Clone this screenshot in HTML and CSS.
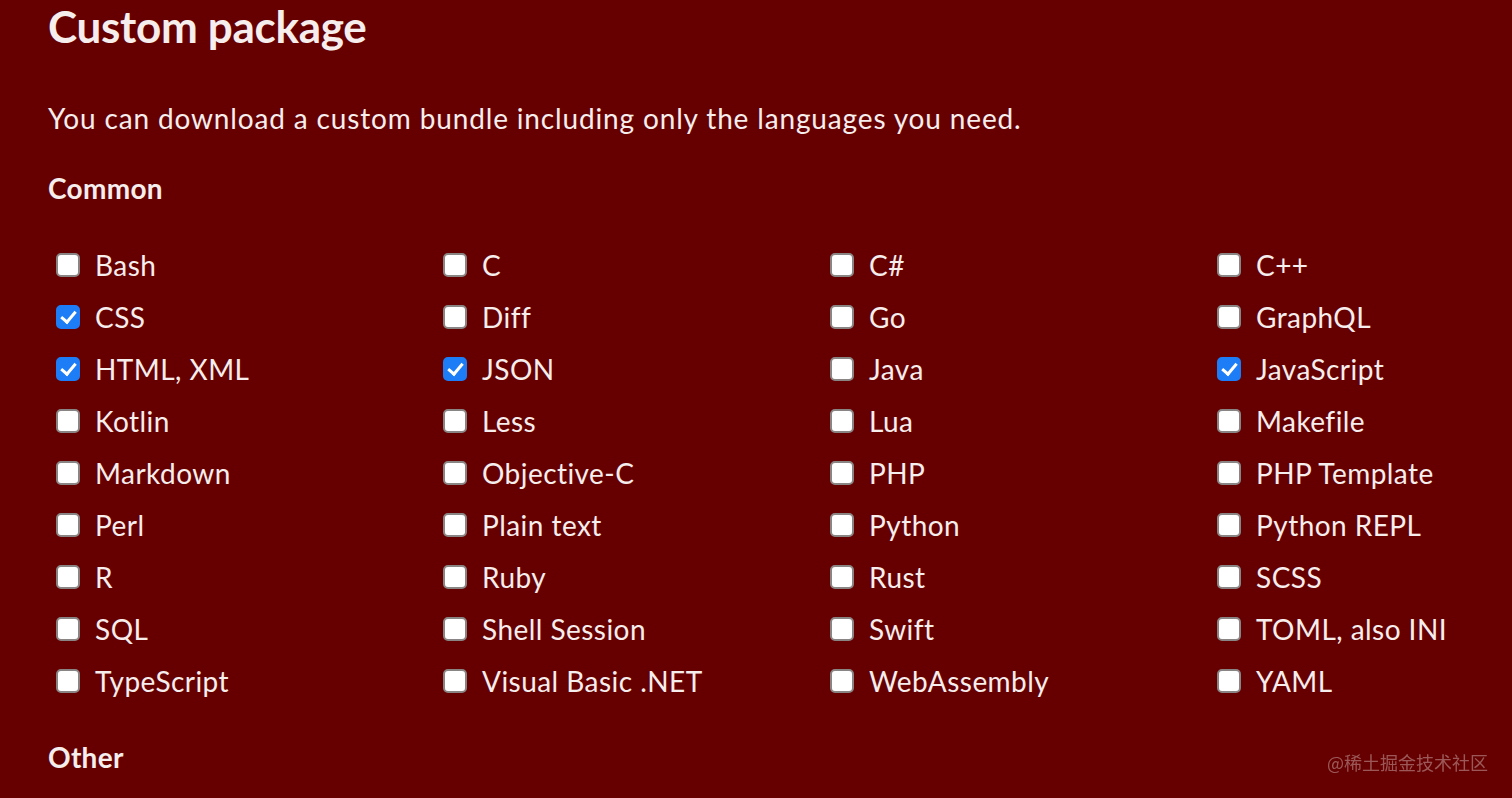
FILE: index.html
```html
<!DOCTYPE html>
<html lang="en">
<head>
<meta charset="utf-8">
<title>Custom package</title>
<link rel="stylesheet" href="styles.css">
</head>
<body>
<main class="page">
  <h2 class="title">Custom package</h2>
  <p class="intro">You can download a custom bundle including only the languages you need.</p>
  <h3 class="group">Common</h3>
  <div class="langs">
    <label class="lang"><input type="checkbox"><span>Bash</span></label>
    <label class="lang"><input type="checkbox"><span>C</span></label>
    <label class="lang"><input type="checkbox"><span>C#</span></label>
    <label class="lang"><input type="checkbox"><span>C++</span></label>
    <label class="lang"><input type="checkbox" checked><span>CSS</span></label>
    <label class="lang"><input type="checkbox"><span>Diff</span></label>
    <label class="lang"><input type="checkbox"><span>Go</span></label>
    <label class="lang"><input type="checkbox"><span>GraphQL</span></label>
    <label class="lang"><input type="checkbox" checked><span>HTML, XML</span></label>
    <label class="lang"><input type="checkbox" checked><span>JSON</span></label>
    <label class="lang"><input type="checkbox"><span>Java</span></label>
    <label class="lang"><input type="checkbox" checked><span>JavaScript</span></label>
    <label class="lang"><input type="checkbox"><span>Kotlin</span></label>
    <label class="lang"><input type="checkbox"><span>Less</span></label>
    <label class="lang"><input type="checkbox"><span>Lua</span></label>
    <label class="lang"><input type="checkbox"><span>Makefile</span></label>
    <label class="lang"><input type="checkbox"><span>Markdown</span></label>
    <label class="lang"><input type="checkbox"><span>Objective-C</span></label>
    <label class="lang"><input type="checkbox"><span>PHP</span></label>
    <label class="lang"><input type="checkbox"><span>PHP Template</span></label>
    <label class="lang"><input type="checkbox"><span>Perl</span></label>
    <label class="lang"><input type="checkbox"><span>Plain text</span></label>
    <label class="lang"><input type="checkbox"><span>Python</span></label>
    <label class="lang"><input type="checkbox"><span>Python REPL</span></label>
    <label class="lang"><input type="checkbox"><span>R</span></label>
    <label class="lang"><input type="checkbox"><span>Ruby</span></label>
    <label class="lang"><input type="checkbox"><span>Rust</span></label>
    <label class="lang"><input type="checkbox"><span>SCSS</span></label>
    <label class="lang"><input type="checkbox"><span>SQL</span></label>
    <label class="lang"><input type="checkbox"><span>Shell Session</span></label>
    <label class="lang"><input type="checkbox"><span>Swift</span></label>
    <label class="lang"><input type="checkbox"><span>TOML, also INI</span></label>
    <label class="lang"><input type="checkbox"><span>TypeScript</span></label>
    <label class="lang"><input type="checkbox"><span>Visual Basic .NET</span></label>
    <label class="lang"><input type="checkbox"><span>WebAssembly</span></label>
    <label class="lang"><input type="checkbox"><span>YAML</span></label>
  </div>
  <h3 class="group group-other">Other</h3>
</main>
<div class="watermark">@稀土掘金技术社区</div>
</body>
</html>
```

FILE: styles.css
```css
html, body {
  margin: 0;
  padding: 0;
  height: 100%;
  overflow: hidden;
}

body {
  background: #660000;
  color: #f6eded;
  font-family: Lato, "Noto Sans", sans-serif;
}

.page {
  padding: 0 0 0 48px;
}

.title {
  margin: -1px 0 0;
  font-size: 44px;
  font-weight: 700;
  line-height: 54px;
  letter-spacing: -0.3px;
}

.intro {
  margin: 47px 0 0;
  font-size: 28px;
  line-height: 36px;
  letter-spacing: 0.85px;
}

.group {
  margin: 34px 0 0;
  font-size: 28px;
  font-weight: 700;
  line-height: 36px;
  letter-spacing: 0.3px;
}

.group-other {
  margin-top: 32px;
}

.langs {
  display: grid;
  grid-template-columns: repeat(3, 387px) 280px;
  grid-auto-rows: 52px;
  margin-top: 33px;
  margin-left: 8px;
}

.lang {
  display: flex;
  align-items: center;
  gap: 15px;
  font-size: 28px;
  line-height: 36px;
  letter-spacing: 0.45px;
}

.lang input {
  appearance: none;
  -webkit-appearance: none;
  margin: 0;
  width: 24px;
  height: 24px;
  flex: none;
  box-sizing: border-box;
  border: 2px solid #8a8585;
  border-radius: 5px;
  background: #ffffff;
  position: relative;
}

.lang input:checked {
  background: #1c7df6;
  border-color: #1c7df6;
}

.lang input:checked::after {
  content: "";
  position: absolute;
  left: 6px;
  top: 1px;
  width: 6px;
  height: 12px;
  border-right: 3.5px solid #fff;
  border-bottom: 3.5px solid #fff;
  transform: rotate(40deg);
}

.watermark {
  position: fixed;
  right: 24px;
  bottom: 23px;
  font-family: "Noto Sans CJK SC", sans-serif;
  font-size: 18px;
  color: rgba(200, 160, 160, 0.55);
}
```
